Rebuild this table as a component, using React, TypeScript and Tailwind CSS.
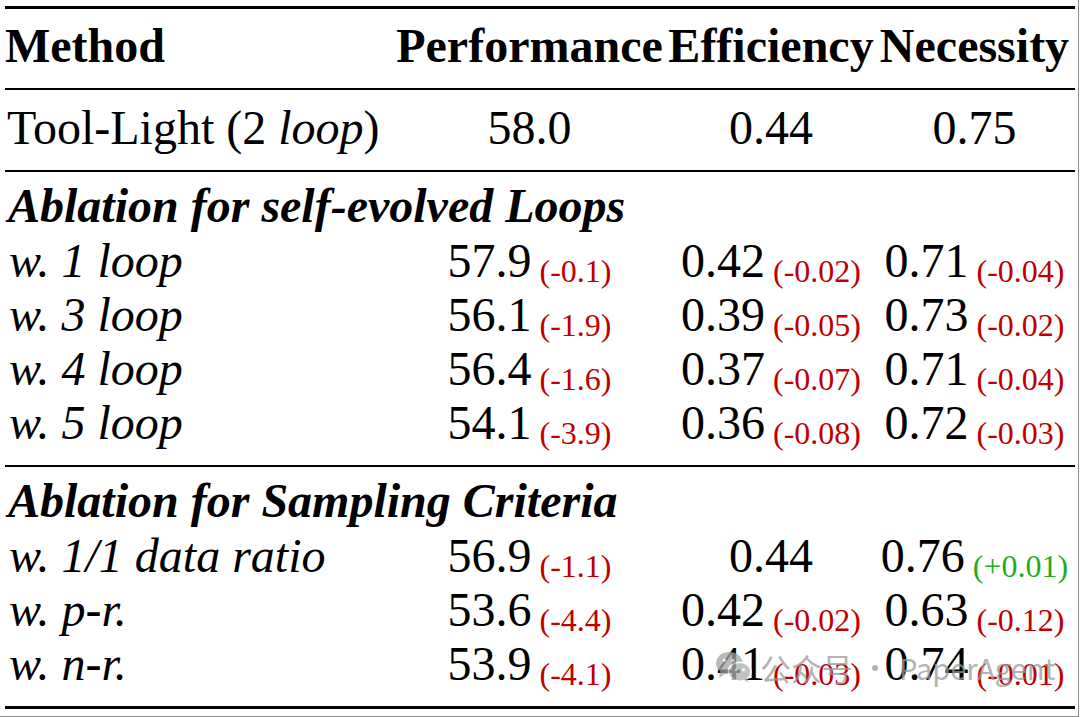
import React from "react";

type Cell = { v: string; d?: string; pos?: boolean };
type Row = { label: string; cells: Cell[] };

const sec1: Row[] = [
  { label: "w. 1 loop", cells: [{ v: "57.9", d: "(-0.1)" }, { v: "0.42", d: "(-0.02)" }, { v: "0.71", d: "(-0.04)" }] },
  { label: "w. 3 loop", cells: [{ v: "56.1", d: "(-1.9)" }, { v: "0.39", d: "(-0.05)" }, { v: "0.73", d: "(-0.02)" }] },
  { label: "w. 4 loop", cells: [{ v: "56.4", d: "(-1.6)" }, { v: "0.37", d: "(-0.07)" }, { v: "0.71", d: "(-0.04)" }] },
  { label: "w. 5 loop", cells: [{ v: "54.1", d: "(-3.9)" }, { v: "0.36", d: "(-0.08)" }, { v: "0.72", d: "(-0.03)" }] },
];

const sec2: Row[] = [
  { label: "w. 1/1 data ratio", cells: [{ v: "56.9", d: "(-1.1)" }, { v: "0.44" }, { v: "0.76", d: "(+0.01)", pos: true }] },
  { label: "w. p-r.", cells: [{ v: "53.6", d: "(-4.4)" }, { v: "0.42", d: "(-0.02)" }, { v: "0.63", d: "(-0.12)" }] },
  { label: "w. n-r.", cells: [{ v: "53.9", d: "(-4.1)" }, { v: "0.41", d: "(-0.03)" }, { v: "0.74", d: "(-0.01)" }] },
];

const grid = "grid grid-cols-[386px_277px_206px_201px]";

function DataRow({ row }: { row: Row }) {
  return (
    <div className={`${grid} h-[54px] leading-[54px] whitespace-nowrap`}>
      <div className="pl-[4px] italic">{row.label}</div>
      {row.cells.map((c, i) => (
        <div key={i} className="text-center">
          {c.v}
          {c.d && (
            <span
              className={`ml-[8px] text-[32px] leading-none align-[-5px] ${
                c.pos ? "text-[#1fae1f]" : "text-[#c00000]"
              }`}
            >
              {c.d}
            </span>
          )}
        </div>
      ))}
    </div>
  );
}

function Section({ title, rows }: { title: string; rows: Row[] }) {
  return (
    <div className="pt-[6px] pb-[15px]">
      <div className="h-[56px] leading-[56px] pl-[3px] font-bold italic whitespace-nowrap">{title}</div>
      {rows.map((r, i) => (
        <DataRow key={i} row={r} />
      ))}
    </div>
  );
}

function WeChatIcon() {
  return (
    <svg width="38" height="34" viewBox="0 0 40 36">
      <ellipse cx="15" cy="14" rx="14" ry="12" fill="#a3a3a3" />
      <path d="M6 22 L4 30 L12 24 Z" fill="#a3a3a3" />
      <ellipse cx="26" cy="23" rx="12" ry="10" fill="#b0b0b0" stroke="#ffffff" strokeWidth="1.5" />
      <path d="M33 30 L36 35 L29 31 Z" fill="#b0b0b0" />
      <circle cx="10" cy="11" r="1.8" fill="#ffffff" />
      <circle cx="19" cy="11" r="1.8" fill="#ffffff" />
      <circle cx="22" cy="21" r="1.5" fill="#ffffff" />
      <circle cx="30" cy="21" r="1.5" fill="#ffffff" />
    </svg>
  );
}

export default function App() {
  return (
    <div className="relative w-[1079px] h-[717px] bg-white border-r border-b border-[#8c8c8c] overflow-hidden font-['Liberation_Serif','Times_New_Roman',serif] text-[48px] text-black">
      <div className="ml-[5px] mt-[6px] w-[1070px]">
        <div className="h-[3px] bg-black" />
        <div className={`${grid} h-[79px] leading-[73px] font-bold whitespace-nowrap`}>
          <div className="pl-0">Method</div>
          <div className="text-center">Performance</div>
          <div className="text-center">Efficiency</div>
          <div className="text-center">Necessity</div>
        </div>
        <div className="h-[2px] bg-black" />
        <div className={`${grid} h-[80px] leading-[76px] whitespace-nowrap`}>
          <div className="pl-[2px]">
            Tool-Light (2 <span className="italic">loop</span>)
          </div>
          <div className="text-center">58.0</div>
          <div className="text-center">0.44</div>
          <div className="text-center">0.75</div>
        </div>
        <div className="h-[2px] bg-black" />
        <Section title="Ablation for self-evolved Loops" rows={sec1} />
        <div className="h-[2px] bg-black" />
        <Section title="Ablation for Sampling Criteria" rows={sec2} />
        <div className="h-[3px] bg-black" />
      </div>

      <div className="absolute left-[715px] top-[650px] flex items-center opacity-75 text-[#9a9a9a] leading-none whitespace-nowrap font-['Noto_Sans_CJK_SC','Noto_Sans',sans-serif]">
        <WeChatIcon />
        <span className="ml-[7px] text-[31px]">公众号</span>
        <span className="ml-[8px] text-[28px]">·</span>
        <span className="ml-[10px] text-[29px]">PaperAgent</span>
      </div>
    </div>
  );
}
